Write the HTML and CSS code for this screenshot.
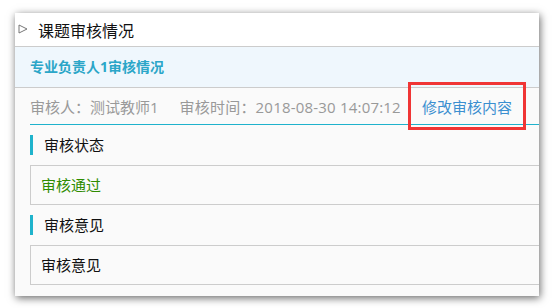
FILE: index.html
```html
<!DOCTYPE html>
<html>

<head>
  <title>课题审核情况</title>
  <link rel="stylesheet" href="styles.css">
</head>

<body>
  <div class="panel">
    <div class="panel-title">
      <svg class="arrow" width="10" height="10" viewBox="0 0 10 10">
        <polygon points="1,1 9,5 1,9" fill="none" stroke="#777" stroke-width="1"/>
      </svg>
      <span>课题审核情况</span>
    </div>
    <div class="review-head">专业负责人1审核情况</div>
    <div class="review-body">
      <div class="info">
        <span class="info-item">审核人：测试教师1</span>
        <span class="info-item info-time">审核时间：2018-08-30 14:07:12</span>
        <span class="edit-wrap">
          <a class="edit-link" href="#">修改审核内容</a>
          <span class="mark"></span>
        </span>
      </div>

      <div class="section-title">审核状态</div>
      <div class="field status-ok">审核通过</div>

      <div class="section-title">审核意见</div>
      <div class="field">审核意见</div>
    </div>
  </div>
</body>

</html>
```

FILE: styles.css
```css
body {
margin: 0;
padding: 13px 17px 12px 15px;
background-color: #fff;
font-family: "Open Sans", "Noto Sans CJK SC", sans-serif;
}

.panel {
background-color: #fafafa;
box-shadow: 1px 2px 8px rgba(0, 0, 0, 0.6);
overflow: hidden;
padding-bottom: 11px;
}

.panel-title {
display: flex;
align-items: center;
height: 33px;
background-color: #fff;
border-bottom: 1px solid #ccc;
font-size: 16px;
color: #111;
}

.arrow {
margin: 0 10px 1px 3px;
}

.review-head {
height: 40px;
line-height: 40px;
padding-left: 15px;
background-color: #eff7fd;
border-bottom: 1px solid #ccc;
font-size: 14px;
font-weight: bold;
color: #2ba6c8;
}

.review-body {
padding-left: 15px;
}

.info {
display: flex;
align-items: center;
height: 36px;
border-bottom: 1px solid #1fb2cc;
font-size: 15px;
color: #999;
}

.info-item {
margin-right: 21px;
}

.info-time {
margin-right: 20px;
letter-spacing: 0.2px;
}

.edit-wrap {
position: relative;
margin-left: 1px;
}

.edit-link {
color: #3b8fd0;
text-decoration: none;
}

.mark {
position: absolute;
left: -14px;
top: -14px;
width: 112px;
height: 42px;
border: 3px solid #f03535;
}

.section-title {
margin-top: 10px;
height: 20px;
line-height: 20px;
padding-left: 11px;
border-left: 3px solid #1fb3cc;
font-size: 15px;
color: #111;
}

.field {
margin-top: 10px;
margin-right: -10px;
height: 38px;
line-height: 38px;
padding-left: 10px;
border: 1px solid #ccc;
font-size: 15px;
color: #111;
}

.status-ok {
color: #2f8c00;
}
```
